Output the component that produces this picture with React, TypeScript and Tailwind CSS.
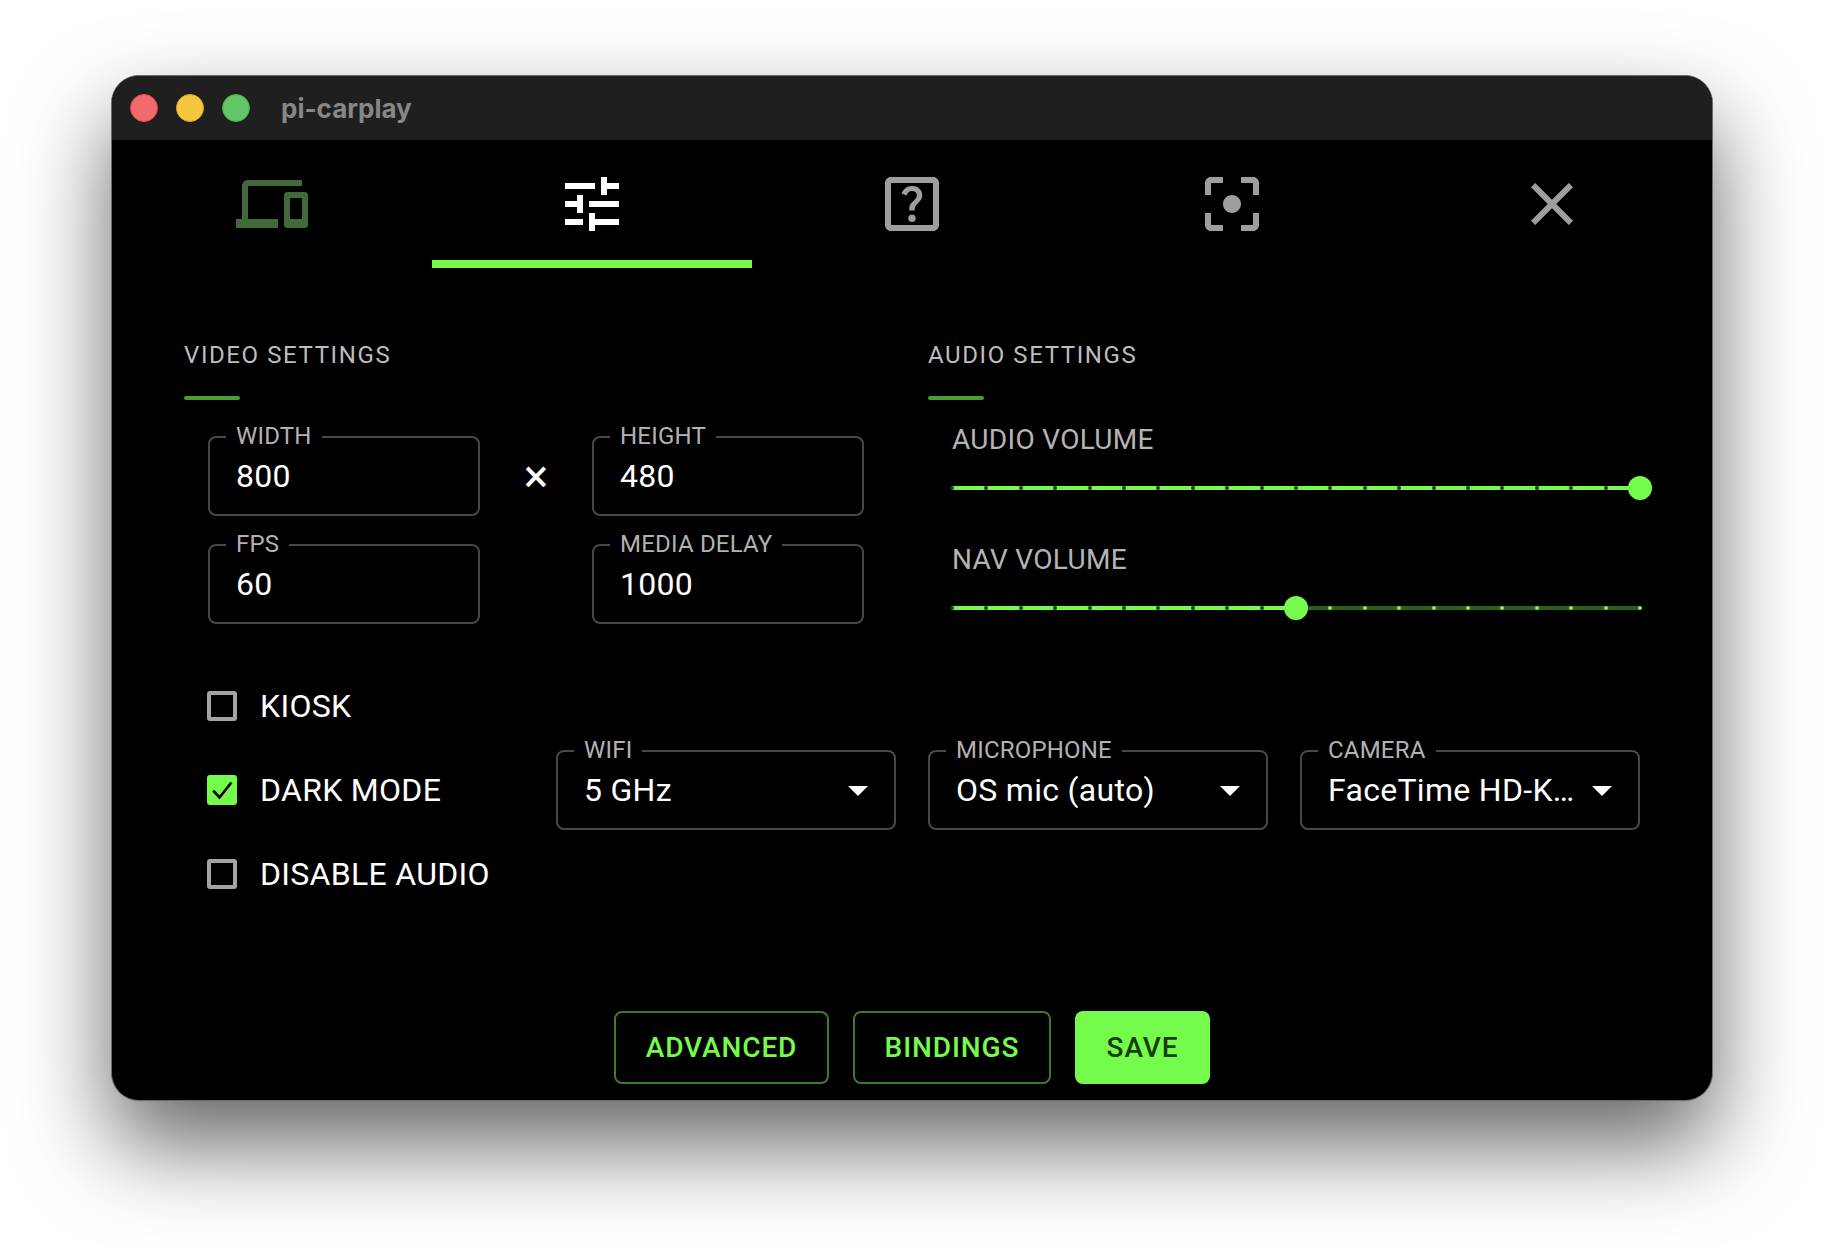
import { MdOutlineHelpCenter } from "react-icons/md";

const roboto = "font-['Roboto',sans-serif]";

const Icon = ({ d, className }: { d: string; className: string }) => (
  <svg viewBox="0 0 24 24" className={`w-[72px] h-[72px] ${className}`} fill="currentColor">
    <path d={d} />
  </svg>
);

function SectionTitle({ children }: { children: string }) {
  return (
    <div>
      <div className="text-[24px] leading-[36px] tracking-[1.6px] text-[#bdbdbd] font-normal">{children}</div>
      <div className="mt-[23px] w-[56px] h-[4px] rounded-full bg-[#479f2f]" />
    </div>
  );
}

function Outlined({ label, value, select, width }: { label: string; value: string; select?: boolean; width: string }) {
  return (
    <div className={`relative h-[80px] ${width} rounded-[8px] border-2 border-[#484848]`}>
      <span className="absolute -top-[17px] left-[16px] bg-black px-[10px] text-[24px] leading-[30px] tracking-[0.2px] text-[#b2b2b2] font-normal">
        {label}
      </span>
      <div className="h-full flex items-center pl-[26px] text-[32px] tracking-[0.3px] text-white font-normal whitespace-nowrap">
        {value}
      </div>
      {select && (
        <div className="absolute right-[26px] top-[34px] w-0 h-0 border-x-[10px] border-x-transparent border-t-[10px] border-t-white" />
      )}
    </div>
  );
}

function VolumeSlider({ label, value }: { label: string; value: number }) {
  return (
    <div className="h-[120px]">
      <div className="text-[28px] leading-[36px] tracking-[0.3px] text-[#b4b4b4] font-normal">{label}</div>
      <div className="relative mt-[28px] w-[688px] h-[4px] bg-[#2c5e1f]">
        <div className="absolute left-0 top-0 h-full bg-[#75fb4c]" style={{ width: `${value}%` }} />
        {Array.from({ length: 21 }).map((_, i) => {
          const pos = i * 5;
          return (
            <div
              key={i}
              className={`absolute top-0 -ml-[2px] w-[4px] h-[4px] rounded-full ${pos <= value ? "bg-[#1a3d10]" : "bg-[#75fb4c]"}`}
              style={{ left: `${pos}%` }}
            />
          );
        })}
        <div
          className="absolute -top-[10px] -ml-[12px] w-[24px] h-[24px] rounded-full bg-[#75fb4c]"
          style={{ left: `${value}%` }}
        />
      </div>
    </div>
  );
}

function Check({ label, checked }: { label: string; checked?: boolean }) {
  return (
    <div className="h-[84px] flex items-center gap-[23px]">
      {checked ? (
        <div className="w-[30px] h-[30px] rounded-[3px] bg-[#75fb4c] flex items-center justify-center">
          <svg viewBox="0 0 24 24" className="w-[30px] h-[30px]" fill="none" stroke="#000" strokeWidth="2.2">
            <path d="M5 12.5l5 5.5L19.5 6" />
          </svg>
        </div>
      ) : (
        <div className="w-[30px] h-[30px] rounded-[3px] border-4 border-[#a3a3a3]" />
      )}
      <span className="text-[32px] tracking-[0.3px] text-white font-normal whitespace-nowrap">{label}</span>
    </div>
  );
}

export default function App() {
  return (
    <div className={`min-h-[1248px] bg-white pt-[75px] ${roboto}`}>
      <div className="mx-auto w-[1602px] h-[1026px] flex flex-col rounded-[28px] border border-[#6a6a6a] bg-black overflow-hidden shadow-[0_44px_90px_rgba(0,0,0,0.6)]">
        <div className="h-[64px] bg-[#1f1f1f] flex items-center pl-[18px]">
          <div className="w-[28px] h-[28px] rounded-full bg-[#f06a6e] border border-[#dc4b4e]" />
          <div className="ml-[18px] w-[28px] h-[28px] rounded-full bg-[#f4c73e] border border-[#dcab24]" />
          <div className="ml-[18px] w-[28px] h-[28px] rounded-full bg-[#63c664] border border-[#3fae3e]" />
          <span className="ml-[31px] text-[26px] font-bold text-[#878787] font-['Inter',sans-serif]">pi-carplay</span>
        </div>

        <div className="grid grid-cols-5 h-[128px]">
          <div className="flex justify-center pt-[28px]">
            <Icon className="text-[#41693a]" d="M4 6h18V4H4c-1.1 0-2 .9-2 2v11H0v3h14v-3H4V6zm19 2h-6c-.55 0-1 .45-1 1v10c0 .55.45 1 1 1h6c.55 0 1-.45 1-1V9c0-.55-.45-1-1-1zm-1 9h-4v-7h4v7z" />
          </div>
          <div className="flex justify-center pt-[28px] border-b-8 border-[#75fb4c]">
            <Icon className="text-white" d="M3 17v2h6v-2H3zM3 5v2h10V5H3zm10 16v-2h8v-2h-8v-2h-2v6h2zM7 9v2H3v2h4v2h2V9H7zm14 4v-2H11v2h10zm-6-4h2V7h4V5h-4V3h-2v6z" />
          </div>
          <div className="flex justify-center pt-[28px]">
            <MdOutlineHelpCenter className="w-[72px] h-[72px] text-[#9e9e9e]" />
          </div>
          <div className="flex justify-center pt-[28px]">
            <Icon className="text-[#9e9e9e]" d="M5 15H3v4c0 1.1.9 2 2 2h4v-2H5v-4zM5 5h4V3H5c-1.1 0-2 .9-2 2v4h2V5zm14-2h-4v2h4v4h2V5c0-1.1-.9-2-2-2zm0 16h-4v2h4c1.1 0 2-.9 2-2v-4h-2v4zM12 9c-1.66 0-3 1.34-3 3s1.34 3 3 3 3-1.34 3-3-1.34-3-3-3z" />
          </div>
          <div className="flex justify-center pt-[28px]">
            <Icon className="text-[#9e9e9e]" d="M19 6.41 17.59 5 12 10.59 6.41 5 5 6.41 10.59 12 5 17.59 6.41 19 12 13.41 17.59 19 19 17.59 13.41 12z" />
          </div>
        </div>

        <div className="flex-1 flex flex-col pl-[72px]">
          <div className="flex mt-[69px] h-[287px]">
            <div className="w-[744px]">
              <SectionTitle>VIDEO SETTINGS</SectionTitle>
              <div className="ml-[24px] mt-[36px] grid grid-cols-[272px_112px_272px] gap-y-[28px] items-center">
                <Outlined label="WIDTH" value="800" width="w-[272px]" />
                <div className="text-center text-[46px] leading-none text-white font-normal">×</div>
                <Outlined label="HEIGHT" value="480" width="w-[272px]" />
                <Outlined label="FPS" value="60" width="w-[272px]" />
                <div />
                <Outlined label="MEDIA DELAY" value="1000" width="w-[272px]" />
              </div>
            </div>
            <div>
              <SectionTitle>AUDIO SETTINGS</SectionTitle>
              <div className="ml-[24px] mt-[22px]">
                <VolumeSlider label="AUDIO VOLUME" value={100} />
                <VolumeSlider label="NAV VOLUME" value={50} />
              </div>
            </div>
          </div>

          <div className="flex items-center mt-[40px] ml-[23px]">
            <div className="w-[349px]">
              <Check label="KIOSK" />
              <Check label="DARK MODE" checked />
              <Check label="DISABLE AUDIO" />
            </div>
            <div className="flex gap-[32px]">
              <Outlined select label="WIFI" value="5 GHz" width="w-[340px]" />
              <Outlined select label="MICROPHONE" value="OS mic (auto)" width="w-[340px]" />
              <Outlined select label="CAMERA" value="FaceTime HD-K…" width="w-[340px]" />
            </div>
          </div>

          <div className="mt-auto mb-[16px] -ml-[72px] flex justify-center gap-[24px] text-[28px] font-medium tracking-[0.9px]">
            <button className="h-[73px] w-[215px] rounded-[8px] border-2 border-[#3c7d2b] text-[#75fb4c]">ADVANCED</button>
            <button className="h-[73px] w-[198px] rounded-[8px] border-2 border-[#3c7d2b] text-[#75fb4c]">BINDINGS</button>
            <button className="h-[73px] w-[135px] rounded-[8px] bg-[#75fb4c] text-[#143d0a]">SAVE</button>
          </div>
        </div>
      </div>
    </div>
  );
}
